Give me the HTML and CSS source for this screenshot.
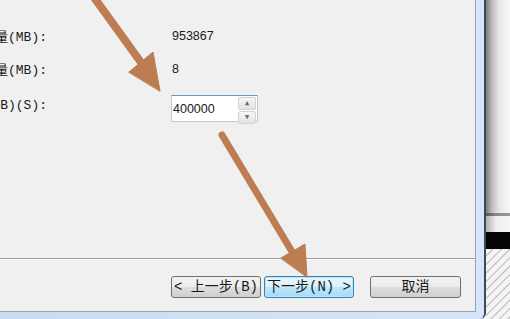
FILE: index.html
```html
<!DOCTYPE html>
<html lang="zh-CN">
<head>
    <meta charset="UTF-8">
    <meta name="viewport" content="width=device-width, initial-scale=1.0">
    <title>新建简单卷向导</title>

    <link rel="stylesheet" href="styles.css">
</head>

<body>
    <div id="screen">
        <div id="window">
            <div id="dialog">
                <div id="fields">
                    <div class="row">
                        <div class="label"><span>最大磁盘空间量(MB):</span></div>
                        <div class="value">953867</div>
                    </div>
                    <div class="row">
                        <div class="label"><span>最小磁盘空间量(MB):</span></div>
                        <div class="value">8</div>
                    </div>
                    <div class="row">
                        <div class="label"><span>简单卷大小(MB)(S):</span></div>
                        <div class="spinbox">
                            <input type="text" class="spin-input" value="400000">
                            <div class="spin-buttons">
                                <div class="spin-btn">&#9652;</div>
                                <div class="spin-btn">&#9662;</div>
                            </div>
                        </div>
                    </div>
                </div>

                <div id="buttons">
                    <button class="btn">&lt; 上一步(B)</button>
                    <button class="btn btn-focus">下一步(N) &gt;</button>
                    <button class="btn btn-cancel">取消</button>
                </div>
            </div>
        </div>

        <!-- desktop behind the dialog -->
        <div id="desk">
            <div class="desk-top"></div>
            <div class="desk-line"></div>
            <div class="desk-white"></div>
            <div class="desk-black"></div>
            <div class="desk-hatch"></div>
        </div>
    </div>

    <!-- annotation arrows drawn over the screenshot -->
    <svg id="arrows" width="510" height="319" viewBox="0 0 510 319">
        <g fill="#bd7c52" stroke="#bd7c52" stroke-linecap="round">
            <line x1="93" y1="-4" x2="140" y2="61" stroke-width="8"/>
            <polygon points="129,72 153,52 160,91" stroke-width="1" stroke-linejoin="round"/>
            <line x1="222" y1="135" x2="291" y2="250" stroke-width="7"/>
            <polygon points="281,258 305,244 307,277" stroke-width="1" stroke-linejoin="round"/>
        </g>
    </svg>
</body>
</html>
```

FILE: styles.css
```css
body {
    margin: 0;
    width: 510px;
    height: 319px;
    overflow: hidden;
    background-color: #ffffff;
    font-family: "Liberation Mono", "Noto Sans CJK SC", monospace;
    color: #1a1a1a;
}

#screen {
    display: flex;
    height: 319px;
}

#window {
    width: 486px;
    height: 319px;
    box-sizing: border-box;
    padding: 0 8px 7px 0;
    background: linear-gradient(to right, #c9dcf2, #d6e6f8);
    border-right: 2px solid #3c4a55;
    border-bottom-right-radius: 6px;
}

#dialog {
    height: 312px;
    box-sizing: border-box;
    display: flex;
    flex-direction: column;
    background-color: #f0f0f0;
    border-right: 1px solid #98a6b4;
    border-bottom: 1px solid #98a6b4;
}

#fields {
    padding-top: 19px;
    flex: 1;
}

.row {
    display: grid;
    grid-template-columns: 47px 1fr;
    column-gap: 124px;
    align-items: center;
    height: 33px;
}

.label {
    display: flex;
    justify-content: flex-end;
    overflow: hidden;
    white-space: nowrap;
    font-size: 13px;
}

.value {
    font-family: "Liberation Sans", Arial, sans-serif;
    font-size: 12.5px;
    padding-left: 1px;
}

.spinbox {
    display: flex;
    width: 87px;
    height: 27px;
    margin-top: 10px;
    box-sizing: border-box;
    background-color: #ffffff;
    border: 1px solid #c3c8cf;
    border-top-color: #6e98c4;
}

.spin-input {
    width: 66px;
    box-sizing: border-box;
    border: none;
    outline: none;
    padding: 0 0 0 1px;
    margin: 0;
    font-family: "Liberation Sans", Arial, sans-serif;
    font-size: 12.5px;
    color: #1a1a1a;
    background: transparent;
}

.spin-buttons {
    display: flex;
    flex-direction: column;
    gap: 1px;
    padding: 1px 1px 1px 0;
    flex: 1;
}

.spin-btn {
    flex: 1;
    display: flex;
    align-items: center;
    justify-content: center;
    font-size: 11px;
    line-height: 1;
    color: #6a6a6a;
    border: 1px solid #cfd3d8;
    border-radius: 2px;
    background: linear-gradient(#f6f6f6, #e2e2e2);
}

#buttons {
    flex: none;
    height: 53px;
    box-sizing: border-box;
    display: flex;
    align-items: flex-start;
    justify-content: flex-end;
    gap: 3px;
    padding: 17px 14px 0 0;
    border-top: 1px solid #a0a0a0;
    box-shadow: inset 0 1px 0 #ffffff;
}

.btn {
    flex: none;
    width: 90px;
    height: 22px;
    box-sizing: border-box;
    padding: 0;
    font-family: "Liberation Mono", "Noto Sans CJK SC", monospace;
    font-size: 14px;
    line-height: 20px;
    color: #1a1a1a;
    border: 1px solid #707070;
    border-radius: 3px;
    background: linear-gradient(#f2f2f2 0%, #ebebeb 50%, #dddddd 51%, #cfcfcf 100%);
    white-space: nowrap;
}

.btn-focus {
    border-color: #3c7fb1;
    background: linear-gradient(#eaf6fd 0%, #d9f0fc 50%, #bee6fd 51%, #a7d9f5 100%);
    box-shadow: inset 0 0 0 1px #b8e6fb;
}

.btn-cancel {
    width: 91px;
    margin-left: 13px;
}

#desk {
    flex: 1;
    display: flex;
    flex-direction: column;
}

.desk-top {
    height: 213px;
    background: linear-gradient(to right, #7d7d7d 0px, #bdbdbd 6px, #e6e6e6 13px, #f8f8f8 24px);
}

.desk-line {
    height: 3px;
    background: linear-gradient(to right, #555 0px, #8a8a8a 10px, #9a9a9a 24px);
}

.desk-white {
    height: 16px;
    background: linear-gradient(to right, #b0b0b0 0px, #eeeeee 10px, #f6f6f6 24px);
}

.desk-black {
    height: 17px;
    background-color: #050505;
}

.desk-hatch {
    flex: 1;
    background-color: #f4f4f4;
    background-image: repeating-linear-gradient(135deg, #f4f4f4 0px, #f4f4f4 4px, #b9b9b9 5px, #f4f4f4 6px);
}

#arrows {
    position: absolute;
    top: 0;
    left: 0;
    pointer-events: none;
}
```
